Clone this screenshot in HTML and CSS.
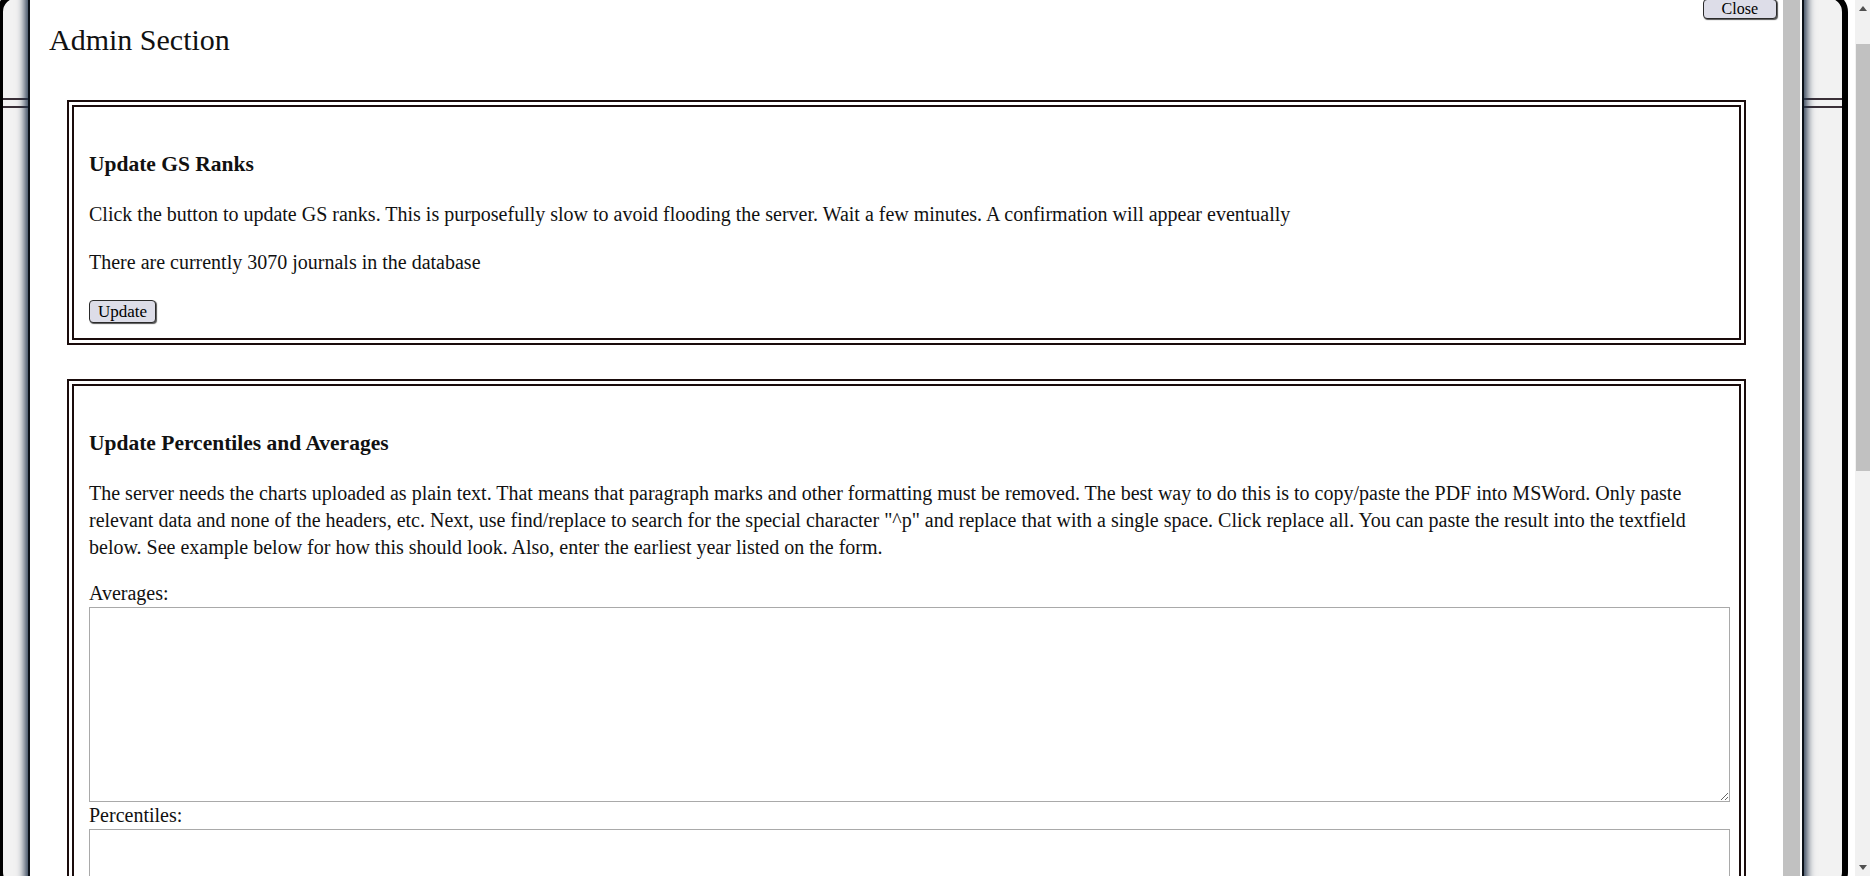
FILE: index.html
```html
<!DOCTYPE html>
<html lang="en">
<head>
<meta charset="utf-8">
<title>Admin Section</title>
<link rel="stylesheet" href="styles.css">
</head>
<body>
<div class="viewport">
  <div class="frame">
    <div class="masthead"></div>
    <div class="masthead-rule"></div>
    <div class="modal">
      <div class="modal-body">
        <h2 class="modal-title">Admin Section</h2>
        <section class="panel">
          <h3 class="panel-title">Update GS Ranks</h3>
          <p class="panel-text">Click the button to update GS ranks. This is purposefully slow to avoid flooding the server. Wait a few minutes. A confirmation will appear eventually</p>
          <p class="panel-text">There are currently 3070 journals in the database</p>
          <div class="panel-actions"><button class="btn btn-update" type="button">Update</button></div>
        </section>
        <section class="panel">
          <h3 class="panel-title">Update Percentiles and Averages</h3>
          <p class="panel-text panel-text-last">The server needs the charts uploaded as plain text. That means that paragraph marks and other formatting must be removed. The best way to do this is to copy/paste the PDF into MSWord. Only paste relevant data and none of the headers, etc. Next, use find/replace to search for the special character "^p" and replace that with a single space. Click replace all. You can paste the result into the textfield below. See example below for how this should look. Also, enter the earliest year listed on the form.</p>
          <label class="field-label" for="averages">Averages:</label>
          <textarea class="field" id="averages"></textarea>
          <label class="field-label" for="percentiles">Percentiles:</label>
          <textarea class="field" id="percentiles"></textarea>
        </section>
      </div>
      <div class="modal-scroll"></div>
      <button class="btn btn-close" type="button">Close</button>
    </div>
  </div>
  <div class="gutter"></div>
  <div class="scrollbar">
    <div class="sb-btn">
      <svg width="8" height="5" viewBox="0 0 8 5"><path d="M0 5 L4 0 L8 5 Z" fill="#505050"/></svg>
    </div>
    <div class="sb-gap"></div>
    <div class="sb-thumb"></div>
    <div class="sb-fill"></div>
    <div class="sb-btn sb-btn-down">
      <svg width="8" height="5" viewBox="0 0 8 5"><path d="M0 0 L8 0 L4 5 Z" fill="#505050"/></svg>
    </div>
  </div>
</div>
</body>
</html>
```

FILE: styles.css
```css
html, body {
  margin: 0;
  padding: 0;
  height: 100%;
  overflow: hidden;
  background: #ffffff;
}

.viewport {
  display: flex;
  width: 1870px;
  height: 876px;
  overflow: hidden;
}

/* background page frame behind the dialog */
.frame {
  position: relative;
  box-sizing: border-box;
  flex: 0 0 1851px;
  margin-left: -3px;
  margin-top: -8px;
  height: 900px;
  border: 6px solid #000000;
  border-radius: 20px;
  background: #f2f2f2;
}

.masthead {
  height: 100px;
}

.masthead-rule {
  box-sizing: border-box;
  height: 10px;
  border-top: 2px solid #3a3038;
  border-bottom: 2px solid #3a3038;
}

/* dialog */
.modal {
  position: absolute;
  left: 25px;
  top: -20px;
  box-sizing: border-box;
  width: 1776px;
  height: 940px;
  display: flex;
  background: #ffffff;
  border-left: 2px solid #0a1018;
  border-right: 2px solid #0a1018;
  box-shadow: 0 0 8px 3px #1f3149;
}

.modal-body {
  flex: 1 1 auto;
  min-width: 0;
  padding: 44px 19px 0;
  overflow: hidden;
  font-family: "Liberation Serif", "DejaVu Serif", serif;
  color: #111111;
}

.modal-scroll {
  flex: 0 0 17px;
  margin-right: 2px;
  background: #c1c1c1;
}

.modal-title {
  margin: 0 0 42px;
  font-size: 30px;
  line-height: 36px;
  font-weight: normal;
}

.panel {
  margin: 0 18px;
  padding: 15px;
  border: 7px double #1a0c0c;
}

.panel + .panel {
  margin-top: 34px;
}

.panel-title {
  margin: 27px 0 22px;
  font-size: 21.5px;
  line-height: 30px;
  font-weight: bold;
}

.panel-text {
  margin: 0 0 21px;
  font-size: 20px;
  line-height: 27px;
}

.panel-text-last {
  margin-bottom: 19px;
}

.panel-actions {
  margin-top: 24px;
}

.btn {
  display: block;
  box-sizing: border-box;
  height: 23px;
  padding: 0 8px;
  font-family: "Liberation Serif", "DejaVu Serif", serif;
  font-size: 17px;
  line-height: 20px;
  color: #000000;
  background: #dddde8;
  border: 1px solid #2a2a2a;
  border-radius: 4px;
  box-shadow: 1px 1px 1px #555555;
}

.btn-close {
  position: absolute;
  top: 21px;
  right: 25px;
  height: 20px;
  padding: 0 18px;
  font-size: 16px;
  line-height: 18px;
}

.field-label {
  display: block;
  font-size: 20px;
  line-height: 27px;
}

.field {
  display: block;
  box-sizing: border-box;
  width: calc(100% + 6px);
  height: 195px;
  margin: 0;
  padding: 2px;
  border: 1px solid #a9a9a9;
  background: #ffffff;
  font-family: "Liberation Serif", serif;
  font-size: 16px;
}

/* page scrollbar */
.gutter {
  flex: 0 0 7px;
  background: #ffffff;
}

.scrollbar {
  flex: 0 0 15px;
  display: flex;
  flex-direction: column;
  background: #f1f1f1;
}

.sb-btn {
  flex: 0 0 17px;
  display: flex;
  align-items: center;
  justify-content: center;
}

.sb-gap {
  flex: 0 0 27px;
}

.sb-thumb {
  flex: 0 0 427px;
  margin-left: 1px;
  background: #c1c1c1;
}

.sb-fill {
  flex: 1 1 auto;
}
```
